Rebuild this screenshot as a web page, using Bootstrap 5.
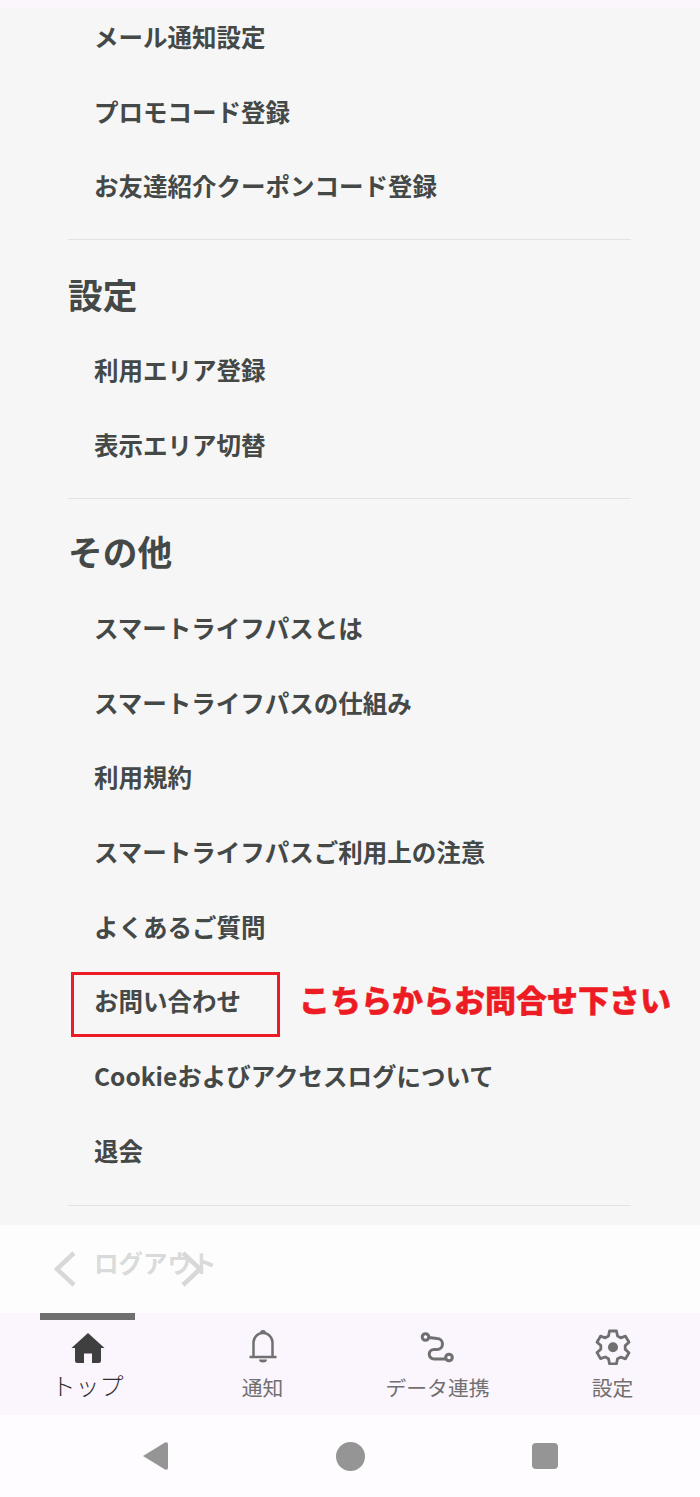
<!doctype html>
<html lang="ja"><head><meta charset="utf-8">
<link rel="stylesheet" href="https://cdn.jsdelivr.net/npm/bootstrap@5.3.0/dist/css/bootstrap.min.css">
<style>
html,body{height:1497px;overflow:hidden;background:#fefcfe}
body{font-family:"Noto Sans CJK JP","Noto Sans",sans-serif;width:700px}
.statusstrip{height:7px;background:#fbf5fd}
.mainarea{height:1306px;background:#f6f6f6;overflow:hidden;position:relative}
.menuwrap{padding:0 69px 0 68px}
.menuitem{display:block;height:74.7px;line-height:60px;padding-left:26px;font-size:24.5px;font-weight:700;color:#444846;text-decoration:none;white-space:nowrap}
.sechead{font-size:34.7px;font-weight:700;color:#444846;line-height:48px;margin:0}
.head-a{padding-top:30px;height:100px}
.head-b{padding-top:28px;height:99px}
.rule{height:1px;background:#e2e2e2;border:0;opacity:1;margin:0}
.rule-a{margin-top:8px}
.rule-b{margin-top:8.6px}
.rule-c{margin-top:9.400px;margin-bottom:27px}
.fadeband{position:absolute;left:0;right:0;bottom:0;height:88px;background:rgba(255,255,255,.8)}
.chev{position:absolute;top:26px}
.chev-l{left:52px}
.chev-r{left:178px}
.hl-box{position:absolute;left:71px;top:965px;width:209px;height:65px;border:3px solid #ed1c24}
.hl-note{position:absolute;left:299px;top:967px;font-size:31px;font-weight:900;color:#ed1c24;-webkit-text-stroke:.4px #ed1c24;line-height:50px;white-space:nowrap}
.tabbar{height:102px;background:#fbf5fd;position:relative}
.tabcell{width:175px;display:flex;flex-direction:column;align-items:center;color:#707070;font-size:20.8px;line-height:30px;padding-top:16px}
.tabcell svg{height:36px;display:block}
.tabcell .lbl{margin-top:7px}
.tabcell.on{color:#2f2f2f}
.tabcell.on .lbl{font-size:24px;margin-top:5px;font-weight:300}
.tabmark{position:absolute;left:40px;top:0;width:95px;height:7px;background:#6f6f6f}
.sysnav{height:82px;background:#fefcfe}
.sys-back{position:absolute;left:141px;top:26px}
.sys-home{position:absolute;left:336px;top:27px;width:29px;height:29px;background:#959595}
.sys-recent{position:absolute;left:532px;top:28px;width:26px;height:26px;background:#959595}
</style></head><body>
<div class="statusstrip"></div>
<div class="mainarea">
  <div class="menuwrap">
    <a class="menuitem" href="#">メール通知設定</a>
    <a class="menuitem" href="#">プロモコード登録</a>
    <a class="menuitem" href="#">お友達紹介クーポンコード登録</a>
    <hr class="rule rule-a">
    <h2 class="sechead head-a">設定</h2>
    <a class="menuitem" href="#">利用エリア登録</a>
    <a class="menuitem" href="#">表示エリア切替</a>
    <hr class="rule rule-b">
    <h2 class="sechead head-b">その他</h2>
    <a class="menuitem" href="#">スマートライフパスとは</a>
    <a class="menuitem" href="#">スマートライフパスの仕組み</a>
    <a class="menuitem" href="#">利用規約</a>
    <a class="menuitem" href="#">スマートライフパスご利用上の注意</a>
    <a class="menuitem" href="#">よくあるご質問</a>
    <a class="menuitem" href="#">お問い合わせ</a>
    <a class="menuitem" href="#">Cookieおよびアクセスログについて</a>
    <a class="menuitem" href="#">退会</a>
    <hr class="rule rule-c">
    <a class="menuitem" href="#">ログアウト</a>
  </div>
  <div class="hl-box"></div>
  <div class="hl-note">こちらからお問合せ下さい</div>
  <div class="fadeband">
    <svg class="chev chev-l" width="26" height="36" viewBox="0 0 26 36"><path d="M22 2 5 18l17 16" fill="none" stroke="#d8d8d8" stroke-width="4.5"/></svg>
    <svg class="chev chev-r" width="26" height="36" viewBox="0 0 26 36"><path d="M5 2l17 16L5 34" fill="none" stroke="#d8d8d8" stroke-width="4.5"/></svg>
  </div>
</div>
<div class="tabbar d-flex">
  <div class="tabmark"></div>
  <div class="tabcell on">
    <svg width="36" height="36" viewBox="0 0 36 36"><path fill="#3f3f3f" d="M18 4 1.500 19H5V31.500a2.500 2.500 0 0 0 2.500 2.500H14V24.500h8V34h6.500a2.500 2.500 0 0 0 2.500-2.500V19h3.500z"/></svg>
    <div class="lbl">トップ</div>
  </div>
  <div class="tabcell">
    <svg width="30" height="36" viewBox="0 0 30 36" fill="none" stroke="#707070" stroke-width="2.500"><path d="M5.500 27V13.500a9.500 9.500 0 0 1 19 0V27"/><path d="M1.500 28h27"/><path fill="#707070" stroke="none" d="M11 30.500h8a4 3 0 0 1-8 0zM12 4a3 3 0 0 1 6 0z"/></svg>
    <div class="lbl">通知</div>
  </div>
  <div class="tabcell">
    <svg width="36" height="36" viewBox="0 0 36 36" fill="none" stroke="#707070" stroke-width="3"><circle cx="5.500" cy="8" r="3.300"/><circle cx="29" cy="28.500" r="3.300"/><path d="M8.800 8.500 17 9.500a5.500 5.500 0 0 1 0 11h-3a4.750 4.750 0 0 0 0 9.500H25.700"/></svg>
    <div class="lbl">データ連携</div>
  </div>
  <div class="tabcell">
    <svg width="36" height="36" viewBox="0 0 36 36" fill="none"><path stroke="#707070" stroke-width="2.800" stroke-linejoin="round" d="M14.500 2h7l1 5 3.200 1.800 4.800-1.600 3.500 6-3.800 3.400v3.800l3.800 3.400-3.500 6-4.800-1.600L22.500 29.800l-1 5h-7l-1-5-3.200-1.800-4.800 1.600-3.500-6 3.800-3.400v-3.800L2 13.200l3.500-6 4.800 1.600 3.200-1.800z"/><circle cx="18" cy="18.300" r="5" fill="#707070"/></svg>
    <div class="lbl">設定</div>
  </div>
</div>
<div class="sysnav position-relative">
  <svg class="sys-back" width="28" height="30" viewBox="0 0 28 30"><path fill="#959595" d="M2 15 24 1.500q3-1 3 2v23q0 3-3 2z"/></svg>
  <div class="sys-home rounded-circle"></div>
  <div class="sys-recent rounded-1"></div>
</div>
</body></html>
